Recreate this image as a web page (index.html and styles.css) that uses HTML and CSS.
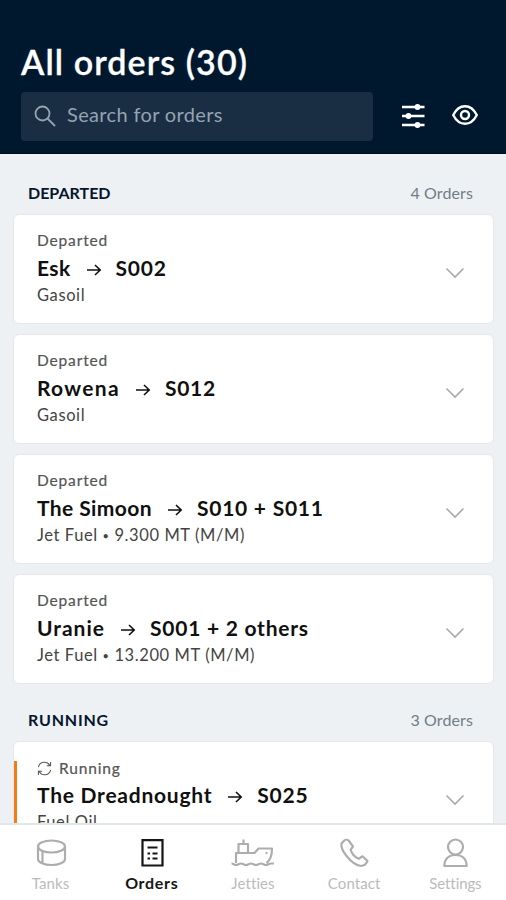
FILE: index.html
```html
<!DOCTYPE html>
<html lang="en">
<head>
<meta charset="utf-8">
<meta name="viewport" content="width=device-width, initial-scale=1">
<title>All orders</title>
<link rel="stylesheet" href="styles.css">
</head>
<body>
<svg class="defs" width="0" height="0" aria-hidden="true">
  <symbol id="arrow" viewBox="0 0 16 16"><path d="M1 8h13M9 3l5.2 5L9 13"/></symbol>
  <symbol id="chevron" viewBox="0 0 20 12"><path d="M1.5 1.5l8.5 8.5 8.5-8.5"/></symbol>
</svg>
<div class="app">
  <header class="header">
    <h1 class="title">All orders (30)</h1>
    <div class="tools">
      <div class="search">
        <svg class="search-icon" viewBox="0 0 22 22"><circle cx="8.5" cy="8.5" r="7"/><path d="M13.5 13.5l7.5 7.5"/></svg>
        <span class="search-text">Search for orders</span>
      </div>
      <svg class="filter-icon" viewBox="0 0 24 26"><path d="M1 4h22.500M1 13h22.500M1 22h22.500"/><circle cx="16.500" cy="4" r="2.900"/><circle cx="7.500" cy="13" r="2.900"/><circle cx="16.500" cy="22" r="2.900"/></svg>
      <svg class="eye-icon" viewBox="0 0 26 20"><path d="M1.200 10C4 4.500 8 1.200 13 1.200S22 4.500 24.800 10C22 15.500 18 18.800 13 18.800S4 15.500 1.200 10z"/><circle cx="13" cy="10" r="4"/></svg>
    </div>
  </header>
  <main class="list">
    <div class="section"><h2 class="section-name">DEPARTED</h2><span class="count">4 Orders</span></div>
    <article class="card">
      <div class="info">
        <div class="status">Departed</div>
        <div class="route"><span class="short">Esk</span><svg class="arrow"><use href="#arrow"/></svg><span>S002</span></div>
        <div class="cargo">Gasoil</div>
      </div>
      <svg class="chevron"><use href="#chevron"/></svg>
    </article>
    <article class="card">
      <div class="info">
        <div class="status">Departed</div>
        <div class="route"><span class="wide">Rowena</span><svg class="arrow"><use href="#arrow"/></svg><span>S012</span></div>
        <div class="cargo">Gasoil</div>
      </div>
      <svg class="chevron"><use href="#chevron"/></svg>
    </article>
    <article class="card">
      <div class="info">
        <div class="status">Departed</div>
        <div class="route"><span class="short">The Simoon</span><svg class="arrow"><use href="#arrow"/></svg><span>S010 + S011</span></div>
        <div class="cargo">Jet Fuel <span class="dot">•</span> 9.300 MT (M/M)</div>
      </div>
      <svg class="chevron"><use href="#chevron"/></svg>
    </article>
    <article class="card">
      <div class="info">
        <div class="status">Departed</div>
        <div class="route"><span class="medium">Uranie</span><svg class="arrow"><use href="#arrow"/></svg><span>S001 + 2 others</span></div>
        <div class="cargo">Jet Fuel <span class="dot">•</span> 13.200 MT (M/M)</div>
      </div>
      <svg class="chevron"><use href="#chevron"/></svg>
    </article>
    <div class="section section-running"><h2 class="section-name">RUNNING</h2><span class="count">3 Orders</span></div>
    <article class="card card-running">
      <div class="info">
        <div class="status status-running"><svg class="sync" viewBox="0 0 16 16"><path d="M1.500 6.500A6.500 6.500 0 0 1 13.500 4.500M14.500 1v4h-4M14.500 9.500A6.500 6.500 0 0 1 2.500 11.500M1.500 15v-4h4"/></svg>Running</div>
        <div class="route"><span>The Dreadnought</span><svg class="arrow"><use href="#arrow"/></svg><span>S025</span></div>
        <div class="cargo">Fuel Oil</div>
      </div>
      <svg class="chevron"><use href="#chevron"/></svg>
    </article>
  </main>
  <nav class="nav">
    <div class="tab"><svg viewBox="0 0 44 30"><ellipse cx="22.500" cy="8.500" rx="13.500" ry="6"/><path d="M9 8.500v12.500c0 3.300 6 6 13.500 6s13.500-2.700 13.500-6V8.500M13.500 13v12.500"/></svg><span>Tanks</span></div>
    <div class="tab active"><svg viewBox="0 0 44 30"><path d="M12.500 2.200h20v25.300h-20z"/><path d="M17.500 9.500h10M17.500 15.500h2.500M22.500 15.500h5M17.500 20.500h2.500M22.500 20.500h5"/></svg><span>Orders</span></div>
    <div class="tab"><svg viewBox="0 0 44 30"><path d="M5 25V15h18.500l4-4.500h13.500c0 6.500-1.500 11.500-5.500 14.500M7.500 15V6h9.500v9M12.500 6V1.500M34.500 15h2M.500 25.500c2 0 2.500 1.500 4.500 1.500s3-1.500 5-1.500 3 1.500 5 1.500 3-1.500 5-1.500 3 1.500 5 1.500 3-1.500 5-1.500 3 1.500 5 1.500 3-1.500 5-1.500h3"/></svg><span>Jetties</span></div>
    <div class="tab"><svg viewBox="0 0 44 30"><path d="M12.300 2.500 9.500 5.500C8 12 19.500 27 29 28l3.500-1c1.500-1.500 2.700-2.500 3-4L30.500 18.300l-3.800 2.400c-4-1.800-7-5-8-9l2.300-3.300L16.500 2.500c-1-1-3.200-1-4.200 0z"/></svg><span>Contact</span></div>
    <div class="tab"><svg viewBox="0 0 44 30"><circle cx="22.500" cy="9" r="7.500"/><path d="M11.300 28c.2-7 4.500-11 11.200-11s11 4 11.200 11z"/></svg><span class="tight">Settings</span></div>
  </nav>
</div>
</body>
</html>
```
FILE: styles.css
```css
* { box-sizing: border-box; }
body { margin: 0; font-family: Lato, "Liberation Sans", sans-serif; color: #111; }
svg { fill: none; stroke: currentColor; display: block; flex: none; }
.defs { position: absolute; }
.app { height: 900px; display: flex; flex-direction: column; overflow: hidden; background: #edf1f3; }
.header { height: 154px; flex: none; background: #00182e; border-bottom: 1px solid #000c18; padding: 42px 28px 0 21px; color: #fff; }
.title { margin: 0; font-size: 34px; line-height: 40px; font-weight: 600; letter-spacing: 1.1px; white-space: nowrap; -webkit-text-stroke: .3px currentColor; }
.tools { display: flex; align-items: center; margin-top: 10px; height: 49px; }
.search { width: 352px; height: 49px; border-radius: 4px; background: #192e43; display: flex; align-items: center; padding-left: 13px; color: #95a3b1; }
.search-icon { width: 22px; height: 22px; margin-top: -2px; stroke-width: 1.8; }
.search-text { margin: -5px 0 0 11px; font-size: 20px; letter-spacing: .35px; }
.filter-icon { width: 24px; height: 26px; margin: -1px 0 0 28px; stroke-width: 2.6; }
.filter-icon circle { fill: #fff; stroke: none; }
.eye-icon { width: 26px; height: 20px; margin-left: 27px; margin-top: -4px; stroke-width: 2.4; }
.list { flex: 1; min-height: 0; overflow: hidden; padding: 28px 12px 0 13px; }
.section { display: flex; justify-content: space-between; height: 32px; padding: 0 21px 0 15px; line-height: 22px; }
.section-running { margin-top: 25px; }
.section-name { margin: 0; font-size: 16px; font-weight: 700; letter-spacing: 0; color: #07142d; }
.section-running .section-name { letter-spacing: .8px; }
.count { font-size: 16px; color: #737c85; letter-spacing: .1px; }
.card { height: 110px; margin-bottom: 10px; background: #fff; border: 1px solid #e4e8e9; border-radius: 6px; display: flex; justify-content: space-between; align-items: center; padding: 0 28px 0 23px; position: relative; white-space: nowrap; }
.info { height: 78px; }
.status { font-size: 15.5px; line-height: 20px; height: 22px; letter-spacing: .85px; color: #555; -webkit-text-stroke: .2px currentColor; }
.status-running { display: flex; align-items: center; }
.sync { width: 15px; height: 15px; margin-right: 7px; stroke-width: 1.1; }
.route { display: flex; align-items: center; font-size: 21px; line-height: 32px; font-weight: 700; letter-spacing: .75px; color: #101010; }
.route .short { letter-spacing: .4px; }
.route .medium { letter-spacing: 1px; }
.route .wide { letter-spacing: 1.3px; }
.arrow { width: 16px; height: 16px; margin: 3px 14px 0 15px; stroke-width: 1.6; }
.cargo { font-size: 16.5px; line-height: 22px; color: #444; letter-spacing: .6px; }
.dot { font-size: 11px; vertical-align: 1px; }
.chevron { width: 20px; height: 12px; color: #aaa; stroke-width: 1.6; margin-top: 8px; }
.card-running::before { content: ""; position: absolute; left: 0; top: 19px; bottom: 0; width: 3px; background: #f47b16; }
.nav { height: 77px; flex: none; background: #fff; border-top: 2px solid #e3e6e7; display: flex; }
.tab { flex: 1; display: flex; flex-direction: column; align-items: center; color: #adadad; padding-top: 13px; }
.tab svg { width: 44px; height: 30px; stroke-width: 2.2; stroke-linejoin: round; }
.tab span { font-size: 15px; line-height: 20px; margin-top: 5px; color: #bbb; letter-spacing: .1px; }
.tab .tight { letter-spacing: -.1px; }
.tab.active, .tab.active span { color: #151515; }
.tab.active span { font-size: 16px; font-weight: 700; letter-spacing: .7px; }
.tab.active svg { stroke-linejoin: miter; }
```
